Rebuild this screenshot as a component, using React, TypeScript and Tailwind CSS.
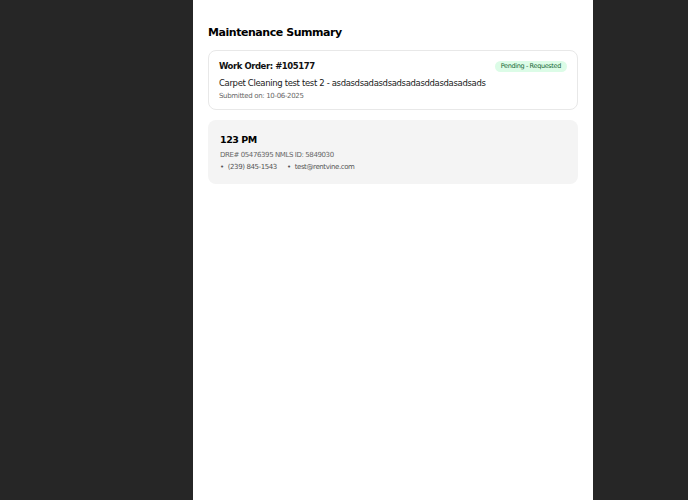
const App = () => {
  return (
    <div className="min-h-[500px] bg-[#262626] font-['DejaVu_Sans',sans-serif]">
      <div className="ml-[193px] w-[400px] min-h-[500px] bg-white px-[15px] pt-[25px]">
        <h1 className="text-[11px] leading-[16px] font-bold tracking-[-0.45px] text-black">Maintenance Summary</h1>

        <div className="mt-[9px] rounded-lg border border-[#e8e8e8] px-[10px] pt-[8px] pb-[8px]">
          <div className="flex items-center justify-between">
            <h2 className="text-[8.5px] leading-[14px] font-bold tracking-[-0.45px] text-[#111]">Work Order: #105177</h2>
            <span className="rounded-full bg-[#dcfce7] px-[6px] py-[2px] text-[6.5px] leading-[7px] tracking-[-0.35px] text-[#166534]">
              Pending - Requested
            </span>
          </div>
          <p className="mt-[4px] text-[8.5px] leading-[12px] tracking-[-0.35px] text-[#1a1a1a]">
            Carpet Cleaning test test 2 - asdasdsadasdsadsadasddasdasadsads
          </p>
          <p className="mt-[2px] text-[7px] leading-[10px] tracking-[-0.33px] text-[#666]">Submitted on: 10-06-2025</p>
        </div>

        <div className="mt-[10px] rounded-lg bg-[#f4f4f4] px-[12px] pt-[13px] pb-[12px]">
          <h3 className="text-[9.5px] leading-[14px] font-bold tracking-[-0.45px] text-black">123 PM</h3>
          <p className="mt-[3px] text-[7px] leading-[10px] tracking-[-0.4px] text-[#666]">DRE# 05476395 NMLS ID: 5849030</p>
          <div className="mt-[2px] flex gap-[10px] text-[7px] leading-[10px] tracking-[-0.4px] text-[#555]">
            <span><span className="mr-[4px]">•</span>(239) 845-1543</span>
            <span><span className="mr-[4px]">•</span>test@rentvine.com</span>
          </div>
        </div>
      </div>
    </div>
  )
}

export default App
